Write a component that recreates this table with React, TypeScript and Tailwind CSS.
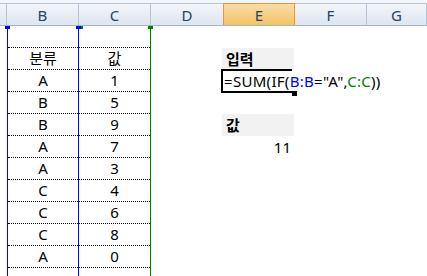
import React from "react";

const cols = ["", "B", "C", "D", "E", "F", "G"];
const widths = ["w-[7px]", "w-[72px]", "w-[72px]", "w-[72px]", "w-[72px]", "w-[72px]", "w-[60px]"];

const rows: [string, string][] = [
  ["", ""],
  ["분류", "값"],
  ["A", "1"],
  ["B", "5"],
  ["B", "9"],
  ["A", "7"],
  ["A", "3"],
  ["C", "4"],
  ["C", "6"],
  ["C", "8"],
  ["A", "0"],
  ["", ""],
];

// right-hand cells in column E, by row index
function ECell({ row }: { row: number }) {
  if (row === 1)
    return <div className="h-full bg-[#f2f2f2] pl-[4px] font-bold">입력</div>;
  if (row === 2)
    return (
      <div className="relative h-full whitespace-nowrap pl-[2px] tracking-[0.3px]">
        {/* active cell outline + fill handle */}
        <div className="absolute left-[-1px] top-[-1px] h-[24px] w-[71px] border-2 border-r-0 border-black" />
        <div className="absolute left-[70px] top-[21px] h-[5px] w-[5px] bg-black" />
        <span>=SUM(IF(</span>
        <span className="text-[#0000ff]">B:B</span>
        <span>=&quot;A&quot;,</span>
        <span className="text-[#008000]">C:C</span>
        <span>))</span>
      </div>
    );
  if (row === 4)
    return <div className="h-full bg-[#f2f2f2] pl-[4px] font-bold">값</div>;
  if (row === 5) return <div className="h-full pr-[3px] text-right">11</div>;
  return null;
}

export default function App() {
  return (
    <div
      className="relative h-[276px] w-[427px] overflow-hidden bg-white text-[15px] leading-[22px] text-black"
      style={{ fontFamily: '"Noto Sans", "Noto Sans CJK KR", sans-serif' }}
    >
      {/* column headers */}
      <div className="flex h-[26px] border-b border-[#9eb6ce] bg-[#f4f6fa] pt-[3px]">
        {cols.map((c, i) => (
          <div
            key={i}
            className={`${widths[i]} flex shrink-0 items-center justify-center border-t text-[15px] ${
              c === "E"
                ? "border-x border-[#f29436] bg-gradient-to-b from-[#f9dca6] to-[#f4c462] text-[#27426a]"
                : "border-r border-[#b3c3d6] border-t-[#b3c3d6] bg-gradient-to-b from-[#f3f6fa] to-[#dde5ef] text-[#27426a]"
            } ${i === 3 ? "border-r-0" : ""}`}
          >
            {c}
          </div>
        ))}
      </div>

      {/* sheet body */}
      {rows.map(([b, c], r) => (
        <div key={r} className="flex h-[22px]">
          <div className="w-[7px] shrink-0" />
          <div className="w-[72px] shrink-0 border-x border-x-[#0000ff]">
            <div className="h-full border-b border-dotted border-black text-center leading-[21px]">{b}</div>
          </div>
          <div className="w-[72px] shrink-0 border-r border-r-[#008000]">
            <div className="h-full border-b border-dotted border-black text-center leading-[21px]">{c}</div>
          </div>
          <div className="w-[71px] shrink-0" />
          <div className="w-[72px] shrink-0">
            <ECell row={r} />
          </div>
        </div>
      ))}

      {/* range handles on the B:B and C:C outlines */}
      <div className="absolute left-[5px] top-[26px] h-[3px] w-[5px] bg-[#0000ff]" />
      <div className="absolute left-[76px] top-[26px] h-[3px] w-[5px] bg-[#0000ff]" />
      <div className="absolute left-[81px] top-[26px] h-[3px] w-[2px] bg-[#008000]" />
      <div className="absolute left-[148px] top-[26px] h-[3px] w-[5px] bg-[#008000]" />
    </div>
  );
}
